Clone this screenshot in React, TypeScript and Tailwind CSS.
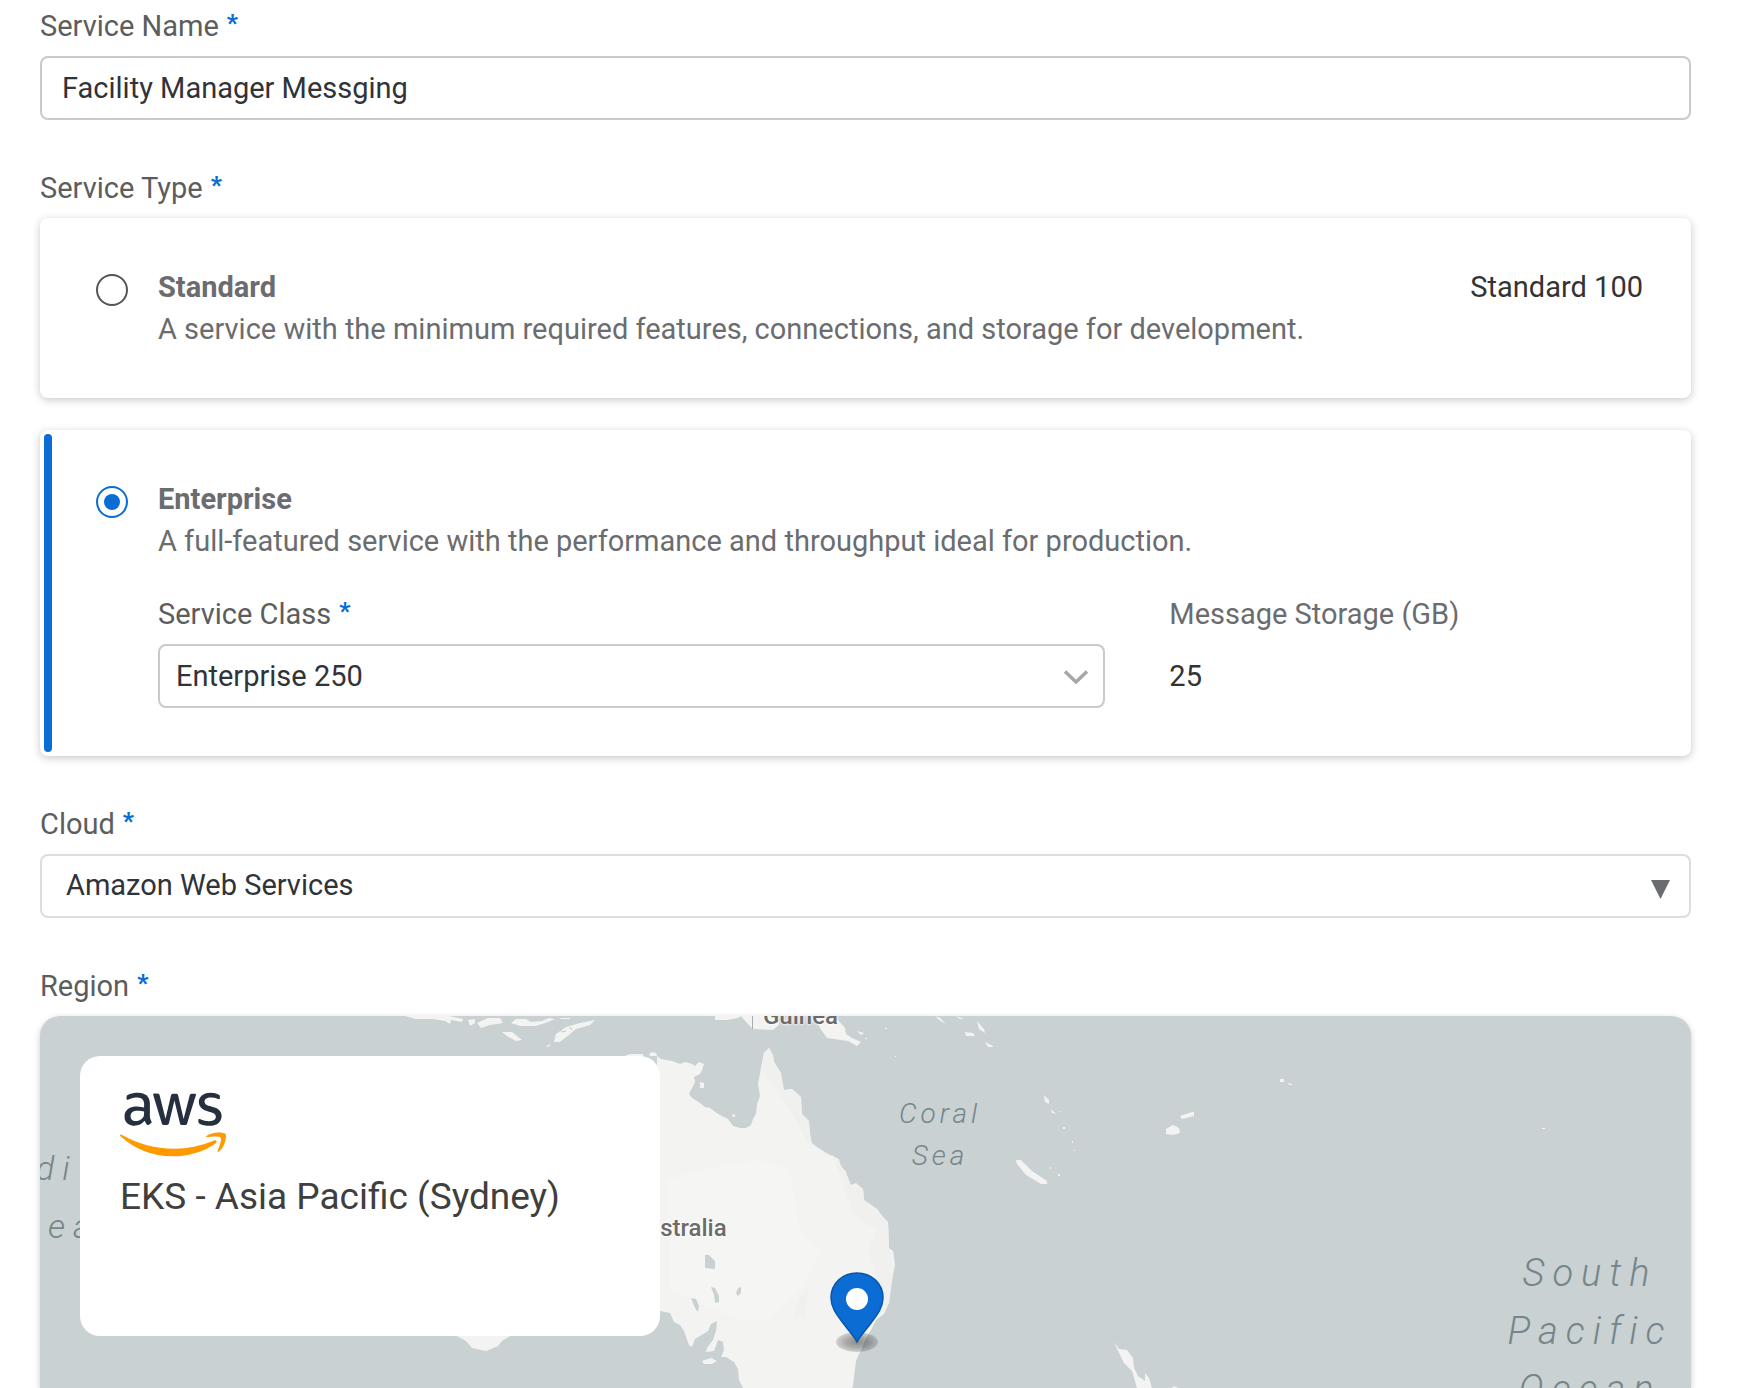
import React, { useState } from "react";
import type { ReactNode } from "react";
import { FaAws } from "react-icons/fa";

function Required() {
  return (
    <span aria-hidden="true" className="ml-2 inline-block align-[5px] text-2xl leading-none font-black text-[#0b6cd4]">
      *
    </span>
  );
}

function FieldLabel({ htmlFor, children }: { htmlFor: string; children: ReactNode }) {
  return (
    <label htmlFor={htmlFor} className="mb-2.5 block h-10 leading-10 text-[#5c5d5e]">
      {children}
      <Required />
    </label>
  );
}

type OptionProps = {
  id: string;
  title: string;
  description: string;
  checked: boolean;
  onSelect: () => void;
  aside?: string;
  children?: ReactNode;
};

function ServiceOption({ id, title, description, checked, onSelect, aside, children }: OptionProps) {
  return (
    <div className="relative flex gap-[30px] rounded-lg bg-white py-12 pr-12 pl-14 shadow-[0_2px_8px_rgba(0,0,0,0.22)]">
      {checked && <div className="absolute inset-y-1 left-1 w-2 rounded-full bg-[#0b6cd4]" />}
      <input
        id={id}
        type="radio"
        name="service-type"
        checked={checked}
        onChange={onSelect}
        className="mt-2 grid size-8 shrink-0 appearance-none place-content-center rounded-full border-2 border-[#555] before:size-4 before:rounded-full checked:border-[#0b6cd4] checked:before:bg-[#0b6cd4]"
      />
      <div className="min-w-0 flex-1 leading-[42px]">
        <div className="flex justify-between">
          <label htmlFor={id} className="font-bold text-[#6b6c6f]">
            {title}
          </label>
          {aside && <span className="text-[#333]">{aside}</span>}
        </div>
        <p className="text-[#6b6c6f]">{description}</p>
        {children}
      </div>
    </div>
  );
}

function MapDrawing() {
  return (
    <svg
      className="absolute top-0 left-0 h-[372px] w-[1651px]"
      viewBox="40 1016 1651 372"
      fill="#f3f4f2"
      aria-hidden="true"
    >
      <defs>
        <radialGradient id="pin-shadow">
          <stop offset="0" stopColor="#000" stopOpacity="0.42" />
          <stop offset="0.55" stopColor="#000" stopOpacity="0.3" />
          <stop offset="1" stopColor="#000" stopOpacity="0.14" />
        </radialGradient>
      </defs>
      <path d="M630 1054 L643 1054 L643 1058 L657 1072 L657 1056 L661 1059 L666 1060 L672 1061 L680 1064 L685 1062 L692 1064 L695 1066 L699 1062 L704 1064 L702 1070 L700 1074 L694 1077 L695 1082 L692 1088 L689 1094 L692 1098 L700 1103 L705 1107 L710 1108 L718 1114 L728 1119 L733 1126 L740 1128 L746 1128 L751 1125 L753 1119 L756 1114 L757 1104 L760 1096 L758 1084 L761 1068 L764 1053 L769 1048 L773 1055 L774 1062 L781 1073 L782 1086 L784 1090 L792 1089 L796 1093 L801 1097 L802 1114 L809 1121 L810 1134 L812 1144 L820 1149 L828 1154 L839 1159 L840 1165 L846 1172 L848 1180 L851 1185 L856 1183 L863 1189 L864 1200 L870 1204 L877 1209 L883 1217 L888 1222 L889 1248 L893 1251 L895 1265 L891 1284 L889 1303 L884 1314 L876 1320 L871 1330 L866 1338 L861 1350 L856 1361 L853 1386 L852 1388 L743 1388 L739 1380 L738 1369 L734 1362 L726 1357 L721 1357 L724 1350 L723 1342 L718 1340 L714 1351 L706 1352 L707 1348 L713 1340 L716 1331 L717 1321 L711 1324 L708 1331 L695 1339 L692 1347 L689 1345 L684 1331 L680 1325 L674 1322 L670 1313 L660 1311 L512 1330 L510 1336 L502 1341 L498 1346 L491 1349 L486 1351 L472 1348 L466 1341 L457 1336 L460 1150 L560 1080 Z" />
      <path d="M649 1054 L652 1052 L656 1053 L657 1056 L650 1056 Z" />
      <g fill="#f0f1ef">
        <path d="M761 1068 L764 1053 L769 1048 L773 1055 L774 1062 L781 1073 L784 1090 L792 1089 L800 1096 L802 1114 L809 1123 L811 1142 L820 1150 L808 1144 L798 1124 L788 1108 L776 1088 Z" />
        <path d="M832 1155 L839 1160 L842 1169 L848 1177 L851 1185 L863 1189 L864 1200 L888 1222 L889 1248 L894 1267 L889 1303 L876 1318 L880 1290 L868 1250 L876 1230 L852 1212 L842 1180 Z" />
        <path d="M798 1300 L808 1288 L806 1317 L794 1317 Z" />
      </g>
      <path fill="#f5f6f4" d="M668 1180 L700 1170 L760 1160 L790 1170 L800 1230 L820 1250 L800 1290 L770 1320 L740 1320 L670 1290 Z" />
      <g fill="#c9d1d3">
        <path d="M705 1255 L709 1255 L715 1261 L715 1269 L705 1268 Z" />
        <path d="M711 1287 L715 1288 L719 1296 L719 1302 L715 1303 L714 1295 Z" />
        <path d="M691 1298 L696 1299 L699 1306 L698 1312 L695 1308 Z" />
        <path d="M736 1293 L738 1288 L741 1287 L741 1293 L738 1296 Z" />
      </g>
      <path d="M702 1361 L711 1358 L717 1361 L712 1364 L704 1364 Z M700 1082 l4 1 v5 h-4 Z M732 1115 l3 -1 v3 h-2 Z" />
      <path d="M715 1016 L741 1016 L738 1018 L727 1020 L715 1020 Z M741 1016 L778 1016 L779 1025 L773 1030 L753 1029 L746 1022 Z M814 1016 L838 1020 L845 1028 L846 1034 L852 1038 L861 1042 L857 1046 L848 1041 L827 1038 L820 1028 Z" />
      <path fill="none" stroke="#a9adad" d="M752.500 1016 V1029" />
      <path d="M405 1016 L449 1016 L463 1019 L462 1022 L451 1020 L450 1024 L445 1021 L433 1019 L415 1019 Z M468 1020 L475 1019 L475 1023 L470 1026 Z M477 1023 L488 1018 L500 1018 L503 1023 L490 1025 L481 1028 Z M511 1023 L516 1019 L526 1019 L531 1022 L542 1021 L549 1018 L555 1019 L545 1023 L536 1026 L520 1026 Z M560 1018 h10 v1 h-9 Z M502 1032 L512 1032 L522 1040 L516 1041 L507 1036 Z M554 1042 L556 1034 L566 1027 L580 1023 L595 1020 L590 1025 L576 1029 L570 1034 L560 1042 Z M546 1046 l5 -2 -3 3 Z" />
      <path fill="none" stroke="#c2c4c3" d="M560 1030 l3 2 3 -1 M570 1027 l2 3" />
      <path d="M935 1016 l5 2 6 6 -7 -4 Z M956 1016 l8 3 h-4 Z M977 1021 l7 8 1 4 -6 -4 Z M965 1032 l8 1 2 3 -9 0 Z M985 1042 l8 4 v1 h-5 Z M857 1031 l7 2 -3 2 Z M865 1038 h2 v1 h-2 Z M885 1028 h2 v1 h-2 Z M895 1056 h1 v1 h-1 Z" />
      <path d="M1044 1095 L1049 1100 L1049 1104 L1045 1102 Z M1051 1109 L1056 1114 L1052 1113 Z M1060 1111 h1 v1 h-1 Z M1063 1127 h2 v2 h-2 Z M1072 1141 h1 v2 h-1 Z M1074 1150 h1 v1 h-1 Z M1050 1167 h1 v2 h-1 Z M1058 1174 h2 v2 h-2 Z" />
      <path d="M1016 1160 L1021 1160 L1032 1171 L1047 1181 L1047 1184 L1041 1184 L1026 1175 L1017 1164 Z" />
      <path d="M1166 1129 L1173 1125 L1179 1128 L1180 1133 L1173 1135 L1166 1134 Z M1180 1116 L1192 1112 L1194 1112 L1194 1116 L1182 1119 Z M1280 1079 h4 v3 h-4 Z M1288 1083 l4 1 v1 h-3 Z M1542 1128 h3 v1 h-3 Z" />
      <path d="M1114 1342 L1119 1349 L1127 1350 L1133 1358 L1134 1368 L1138 1376 L1145 1381 L1145 1373 L1149 1378 L1152 1388 L1137 1388 L1132 1371 L1124 1363 L1119 1353 Z M1172 1388 l2 -2 4 2 Z" />
      <ellipse cx="857" cy="1342" rx="21" ry="10" fill="url(#pin-shadow)" />
      <path
        fill="#0b6cd4"
        stroke="#0a55a8"
        strokeWidth="1.5"
        d="M857 1342 C854 1336 849 1331 843 1323 C836 1314 831 1307 831 1298 C831 1283 843 1273 857 1273 C871 1273 883 1283 883 1298 C883 1307 878 1314 871 1323 C865 1331 860 1336 857 1342 Z"
      />
      <circle cx="857" cy="1299" r="11" fill="#fff" />
    </svg>
  );
}

function RegionMap() {
  return (
    <div className="relative h-[372px] overflow-hidden rounded-t-[20px] bg-[#c9d1d3] shadow-[0_2px_6px_rgba(0,0,0,0.2)]">
      <MapDrawing />
      <div className="text-[#75868a] italic">
        <span className="absolute top-[77px] left-[858px] w-[84px] text-center text-[28px] leading-[42px] font-light tracking-[4px]">
          Coral Sea
        </span>
        <span className="absolute top-[228px] left-[1450px] w-[200px] text-center text-[38px] leading-[58px] font-light tracking-[8px]">
          South Pacific Ocean
        </span>
        <div className="absolute top-[123px] -left-1 text-[34px] leading-[58px] font-light tracking-[8px]">
          <div>di</div>
          <div className="pl-3">ea</div>
        </div>
      </div>
      <div className="text-2xl font-medium text-[#6b6b6b] [text-shadow:0_0_3px_#fff,0_0_3px_#fff]">
        <span className="absolute -top-4 left-[723px] leading-8">Guinea</span>
        <span className="absolute top-[196px] left-[591px] leading-8">Australia</span>
      </div>
      <section className="absolute top-10 left-10 h-[280px] w-[580px] rounded-[20px] bg-white px-10 pt-[26px]">
        <svg width="0" height="0" className="absolute" aria-hidden="true">
          <linearGradient id="aws-tones" x1="0" y1="0" x2="0" y2="1">
            <stop offset="0.56" stopColor="#252f3e" />
            <stop offset="0.56" stopColor="#ff9900" />
          </linearGradient>
        </svg>
        <FaAws aria-label="AWS" className="h-[85px] w-[106px] fill-[url(#aws-tones)]" />
        <h2 className="mt-2 text-[37px] leading-[44px] whitespace-nowrap text-[#3f3f3f]">EKS - Asia Pacific (Sydney)</h2>
      </section>
    </div>
  );
}

export default function App() {
  const [type, setType] = useState("enterprise");
  return (
    <form className="flex flex-col gap-12 overflow-hidden bg-white pt-1.5 pr-[49px] pl-10 font-[Roboto,sans-serif] text-[29px]">
      <div>
        <FieldLabel htmlFor="service-name">Service Name</FieldLabel>
        <input
          id="service-name"
          type="text"
          defaultValue="Facility Manager Messging"
          className="block h-16 w-full rounded-lg border-2 border-[#c9cacb] px-5 text-[#303338]"
        />
      </div>

      <fieldset>
        <legend className="mb-2.5 h-10 leading-10 text-[#5c5d5e]">
          Service Type
          <Required />
        </legend>
        <div className="flex flex-col gap-8">
          <ServiceOption
            id="standard"
            title="Standard"
            description="A service with the minimum required features, connections, and storage for development."
            aside="Standard 100"
            checked={type === "standard"}
            onSelect={() => setType("standard")}
          />
          <ServiceOption
            id="enterprise"
            title="Enterprise"
            description="A full-featured service with the performance and throughput ideal for production."
            checked={type === "enterprise"}
            onSelect={() => setType("enterprise")}
          >
            <div className="mt-8 grid grid-cols-[2fr_1fr] gap-16">
              <div>
                <FieldLabel htmlFor="service-class">Service Class</FieldLabel>
                <div className="relative">
                  <select
                    id="service-class"
                    className="block h-16 w-full appearance-none rounded-lg border-2 border-[#c9cacb] bg-white px-4 text-[#303338]"
                  >
                    <option>Enterprise 250</option>
                  </select>
                  <svg
                    className="pointer-events-none absolute top-[26px] right-4 h-[14px] w-[26px]"
                    viewBox="0 0 26 14"
                    fill="none"
                    stroke="#a5a7a9"
                    strokeWidth="3.5"
                    aria-hidden="true"
                  >
                    <path d="M2 1.500 L13 12 L24 1.500" />
                  </svg>
                </div>
              </div>
              <div>
                <div className="mb-2.5 leading-10 text-[#6b6c6f]">Message Storage (GB)</div>
                <div className="leading-16 text-[#303338]">25</div>
              </div>
            </div>
          </ServiceOption>
        </div>
      </fieldset>

      <div>
        <FieldLabel htmlFor="cloud">Cloud</FieldLabel>
        <div className="relative">
          <select
            id="cloud"
            className="block h-16 w-full appearance-none rounded-lg border-2 border-[#dcdddd] bg-white px-6 text-[#303338]"
          >
            <option>Amazon Web Services</option>
          </select>
          <svg
            className="pointer-events-none absolute top-[26px] right-[21px] h-[19px] w-[19px]"
            viewBox="0 0 19 19"
            fill="#6b6c6f"
            aria-hidden="true"
          >
            <path d="M0 0 H19 L9.500 19 Z" />
          </svg>
        </div>
      </div>

      <section aria-labelledby="region-title">
        <h2 id="region-title" className="mb-2.5 h-10 leading-10 text-[#5c5d5e]">
          Region
          <Required />
        </h2>
        <RegionMap />
      </section>
    </form>
  );
}
